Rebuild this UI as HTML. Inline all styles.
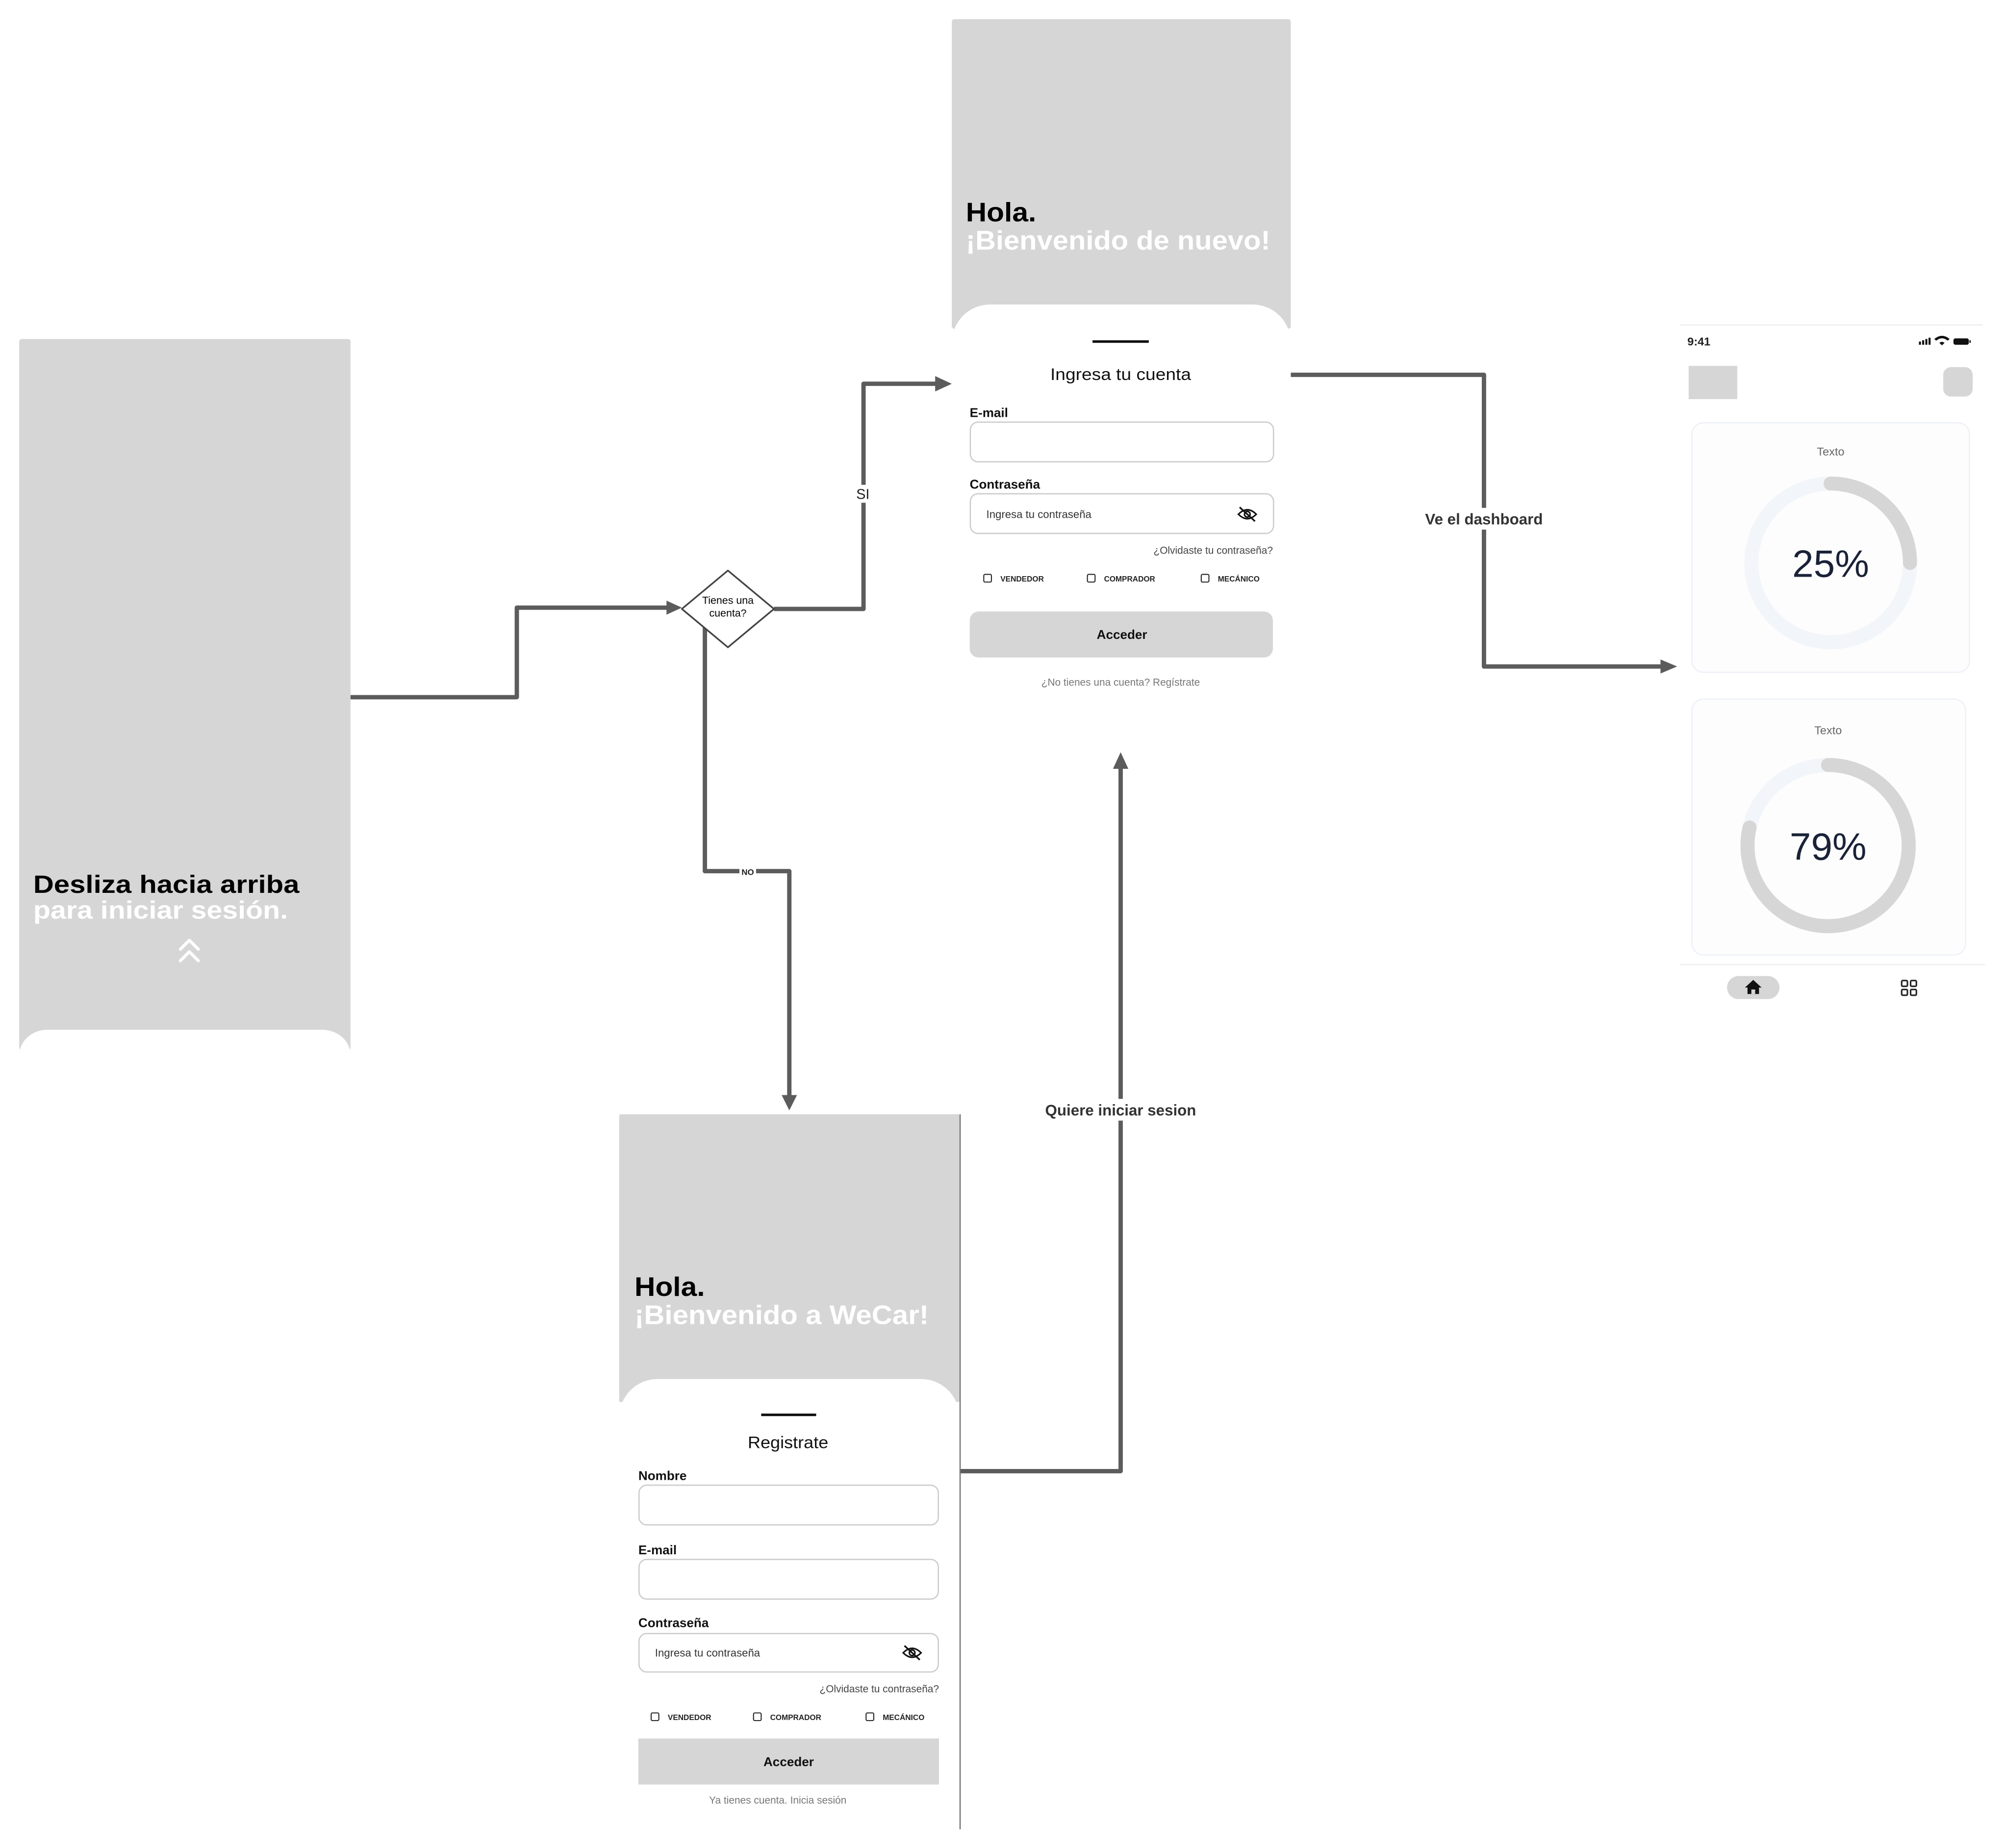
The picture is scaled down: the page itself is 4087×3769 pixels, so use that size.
<!DOCTYPE html>
<html><head><meta charset="utf-8">
<style>
html,body{margin:0;padding:0;background:#fff;width:4087px;height:3769px;overflow:hidden}
svg{display:block}
text{font-family:"Liberation Sans",Arial,sans-serif}
</style></head>
<body>
<svg width="4087" height="3769" viewBox="0 0 1566.5 1444.6" preserveAspectRatio="none" xmlns="http://www.w3.org/2000/svg">
<defs>
<g id="eye">
<path d="M-7 0 Q0 -7 7 0 Q0 7 -7 0 Z" fill="none" stroke="#111" stroke-width="1.2"/>
<circle cx="0" cy="0" r="2.2" fill="none" stroke="#111" stroke-width="1.2"/>
<line x1="-6" y1="-5.5" x2="6" y2="5.5" stroke="#111" stroke-width="1.3"/>
</g>
</defs>

<rect x="15" y="265" width="259" height="556" fill="#d6d6d6" rx="2"/>
<rect x="15" y="805" width="259" height="40" rx="22" fill="#fff"/>
<text x="26" y="698" font-size="19.5" font-weight="bold" fill="#000" textLength="208" lengthAdjust="spacingAndGlyphs">Desliza hacia arriba</text>
<text x="26" y="718" font-size="19.5" font-weight="bold" fill="#fff" textLength="199" lengthAdjust="spacingAndGlyphs">para iniciar sesión.</text>
<path d="M141 742 L148 735 L155 742 M141 751 L148 744 L155 751" fill="none" stroke="#fff" stroke-width="2.4" stroke-linecap="round" stroke-linejoin="round"/>

<g fill="none" stroke="#5c5c5c" stroke-width="3.4" stroke-linejoin="round">
<path d="M274 545 H404 V475 H524"/>
<path d="M605 476 H675 V300 H734"/>
<path d="M551 490 V681 H617 V858"/>
<path d="M1009 293 H1160 V521 H1300"/>
<path d="M750 1150 H876 V600"/>
</g>
<g fill="#5c5c5c">
<polygon points="533,475 521,469.5 521,480.5"/>
<polygon points="744,300 731,294 731,306"/>
<polygon points="617,868 611,856 623,856"/>
<polygon points="1311,521 1298,515.5 1298,526.5"/>
<polygon points="876,588 870,601 882,601"/>
</g>
<polygon points="569,446 605,476 569,506 533,476" fill="#fff" stroke="#444" stroke-width="1.3" stroke-linejoin="round"/>
<text x="569" y="472" font-size="8.2" text-anchor="middle" fill="#000">Tienes una</text>
<text x="569" y="482" font-size="8.2" text-anchor="middle" fill="#000">cuenta?</text>
<rect x="667" y="379" width="15" height="14" fill="#fff"/>
<text x="674.5" y="390" font-size="11" text-anchor="middle" fill="#222">SI</text>
<rect x="578" y="677" width="13" height="8" fill="#fff"/>
<text x="584.5" y="684" font-size="6.5" font-weight="bold" text-anchor="middle" fill="#222">NO</text>
<rect x="1112" y="397" width="96" height="17" fill="#fff"/>
<text x="1160" y="410" font-size="12" font-weight="bold" text-anchor="middle" fill="#333">Ve el dashboard</text>
<rect x="816" y="859" width="120" height="17" fill="#fff"/>
<text x="876" y="872" font-size="12" font-weight="bold" text-anchor="middle" fill="#333">Quiere iniciar sesion</text>

<rect x="744" y="15" width="265" height="242" fill="#d6d6d6" rx="2"/>
<rect x="744" y="238" width="265" height="330" rx="30" fill="#fff"/>
<rect x="744" y="270" width="265" height="300" fill="#fff"/>
<text x="755" y="173" font-size="21" font-weight="bold" fill="#000" textLength="55" lengthAdjust="spacingAndGlyphs">Hola.</text>
<text x="755" y="195" font-size="21" font-weight="bold" fill="#fff" textLength="238" lengthAdjust="spacingAndGlyphs">¡Bienvenido de nuevo!</text>
<rect x="854" y="266" width="44" height="2" fill="#111"/>
<text x="876" y="297" font-size="13" text-anchor="middle" fill="#111" textLength="110" lengthAdjust="spacingAndGlyphs">Ingresa tu cuenta</text>
<text x="758" y="326" font-size="10" font-weight="bold" fill="#111">E-mail</text>
<rect x="758.5" y="330" width="237" height="31" rx="6" fill="#fff" stroke="#ccc" stroke-width="1"/>
<text x="758" y="382" font-size="10" font-weight="bold" fill="#111">Contraseña</text>
<rect x="758.5" y="386" width="237" height="31" rx="6" fill="#fff" stroke="#ccc" stroke-width="1"/>
<text x="771" y="405" font-size="8.5" fill="#333">Ingresa tu contraseña</text>
<use href="#eye" x="975" y="402"/>
<text x="995" y="433" font-size="8" text-anchor="end" fill="#444">¿Olvidaste tu contraseña?</text>
<g font-size="6" font-weight="bold" fill="#222">
<rect x="769" y="449" width="6" height="6" rx="1" fill="none" stroke="#222" stroke-width="0.8"/>
<text x="782" y="454.5">VENDEDOR</text>
<rect x="850" y="449" width="6" height="6" rx="1" fill="none" stroke="#222" stroke-width="0.8"/>
<text x="863" y="454.5">COMPRADOR</text>
<rect x="939" y="449" width="6" height="6" rx="1" fill="none" stroke="#222" stroke-width="0.8"/>
<text x="952" y="454.5">MECÁNICO</text>
</g>
<rect x="758" y="478" width="237" height="36" rx="7" fill="#d6d6d6"/>
<text x="877" y="499.5" font-size="10" font-weight="bold" text-anchor="middle" fill="#111">Acceder</text>
<text x="876" y="536" font-size="8" text-anchor="middle" fill="#777">¿No tienes una cuenta? Regístrate</text>

<rect x="484" y="871" width="266" height="225" fill="#d6d6d6" rx="1"/>
<rect x="484" y="1078" width="266" height="362" rx="30" fill="#fff"/>
<rect x="484" y="1110" width="266" height="330" fill="#fff"/>
<line x1="750.5" y1="871" x2="750.5" y2="1430" stroke="#777" stroke-width="1"/>
<text x="496" y="1013" font-size="21" font-weight="bold" fill="#000" textLength="55" lengthAdjust="spacingAndGlyphs">Hola.</text>
<text x="496" y="1035" font-size="21" font-weight="bold" fill="#fff" textLength="230" lengthAdjust="spacingAndGlyphs">¡Bienvenido a WeCar!</text>
<rect x="595" y="1105" width="43" height="2" fill="#111"/>
<text x="616" y="1132" font-size="13" text-anchor="middle" fill="#111" textLength="63" lengthAdjust="spacingAndGlyphs">Registrate</text>
<text x="499" y="1157" font-size="10" font-weight="bold" fill="#111">Nombre</text>
<rect x="499.5" y="1161" width="234" height="31" rx="6" fill="#fff" stroke="#ccc"/>
<text x="499" y="1215" font-size="10" font-weight="bold" fill="#111">E-mail</text>
<rect x="499.5" y="1219" width="234" height="31" rx="6" fill="#fff" stroke="#ccc"/>
<text x="499" y="1272" font-size="10" font-weight="bold" fill="#111">Contraseña</text>
<rect x="499.5" y="1277" width="234" height="30" rx="6" fill="#fff" stroke="#ccc"/>
<text x="512" y="1295" font-size="8.5" fill="#333">Ingresa tu contraseña</text>
<use href="#eye" x="713" y="1292"/>
<text x="734" y="1323" font-size="8" text-anchor="end" fill="#444">¿Olvidaste tu contraseña?</text>
<g font-size="6" font-weight="bold" fill="#222">
<rect x="509" y="1339" width="6" height="6" rx="1" fill="none" stroke="#222" stroke-width="0.8"/>
<text x="522" y="1344.5">VENDEDOR</text>
<rect x="589" y="1339" width="6" height="6" rx="1" fill="none" stroke="#222" stroke-width="0.8"/>
<text x="602" y="1344.5">COMPRADOR</text>
<rect x="677" y="1339" width="6" height="6" rx="1" fill="none" stroke="#222" stroke-width="0.8"/>
<text x="690" y="1344.5">MECÁNICO</text>
</g>
<rect x="499" y="1359" width="235" height="36" fill="#d6d6d6"/>
<text x="616.5" y="1380.5" font-size="10" font-weight="bold" text-anchor="middle" fill="#111">Acceder</text>
<text x="608" y="1410" font-size="8" text-anchor="middle" fill="#777">Ya tienes cuenta.  Inicia sesión</text>

<line x1="1313" y1="254" x2="1550" y2="254" stroke="#eee" stroke-width="1"/>
<text x="1319" y="270" font-size="9" font-weight="bold" fill="#222">9:41</text>
<g fill="#111">
<rect x="1500" y="267" width="1.6" height="2.5"/><rect x="1502.5" y="266" width="1.6" height="3.5"/><rect x="1505" y="265" width="1.6" height="4.5"/><rect x="1507.5" y="264" width="1.6" height="5.5"/>
<path d="M1512 265 Q1518 260 1524 265 L1522.5 266.3 Q1518 262.6 1513.5 266.3 Z"/>
<path d="M1516 268 L1518 270 L1520 268 Q1518 266.5 1516 268 Z"/>
<rect x="1527" y="264.5" width="12" height="5" rx="1.5"/>
<rect x="1539.5" y="266" width="1" height="2"/>
</g>
<rect x="1320" y="286" width="38" height="26" fill="#d6d6d6"/>
<rect x="1519" y="287" width="23" height="23" rx="6" fill="#d6d6d6"/>

<rect x="1322.5" y="330.5" width="217" height="195" rx="9" fill="#fdfdfd" stroke="#edf1f8"/>
<text x="1431" y="356" font-size="9" text-anchor="middle" fill="#666">Texto</text>
<circle cx="1431" cy="440" r="62" fill="none" stroke="#f2f5f9" stroke-width="11"/>
<circle cx="1431" cy="440" r="62" fill="none" stroke="#d6d6d6" stroke-width="11" stroke-linecap="round" stroke-dasharray="97.4 400" transform="rotate(-90 1431 440)"/>
<text x="1431" y="451" font-size="30" text-anchor="middle" fill="#1a2238">25%</text>

<rect x="1322.5" y="546.5" width="214" height="200" rx="9" fill="#fdfdfd" stroke="#edf1f8"/>
<text x="1429" y="574" font-size="9" text-anchor="middle" fill="#666">Texto</text>
<circle cx="1429" cy="661" r="63" fill="none" stroke="#f2f5f9" stroke-width="11"/>
<circle cx="1429" cy="661" r="63" fill="none" stroke="#d6d6d6" stroke-width="11" stroke-linecap="round" stroke-dasharray="311 400" transform="rotate(-90 1429 661)"/>
<text x="1429" y="672" font-size="30" text-anchor="middle" fill="#1a2238">79%</text>

<line x1="1313" y1="754" x2="1552" y2="754" stroke="#f0f0f0" stroke-width="1"/>
<rect x="1350" y="763" width="41" height="18" rx="9" fill="#d6d6d6"/>
<path d="M1364 772 L1370.5 766 L1377 772 H1375 V777 H1366 V772 Z" fill="#111"/>
<rect x="1369" y="773.5" width="3" height="3.5" fill="#d6d6d6"/>
<g fill="none" stroke="#222" stroke-width="1.2">
<rect x="1486.5" y="766.5" width="4.5" height="4.5" rx="0.8"/><rect x="1493.5" y="766.5" width="4.5" height="4.5" rx="0.8"/>
<rect x="1486.5" y="773.5" width="4.5" height="4.5" rx="0.8"/><rect x="1493.5" y="773.5" width="4.5" height="4.5" rx="0.8"/>
</g>
</svg>
</body></html>
